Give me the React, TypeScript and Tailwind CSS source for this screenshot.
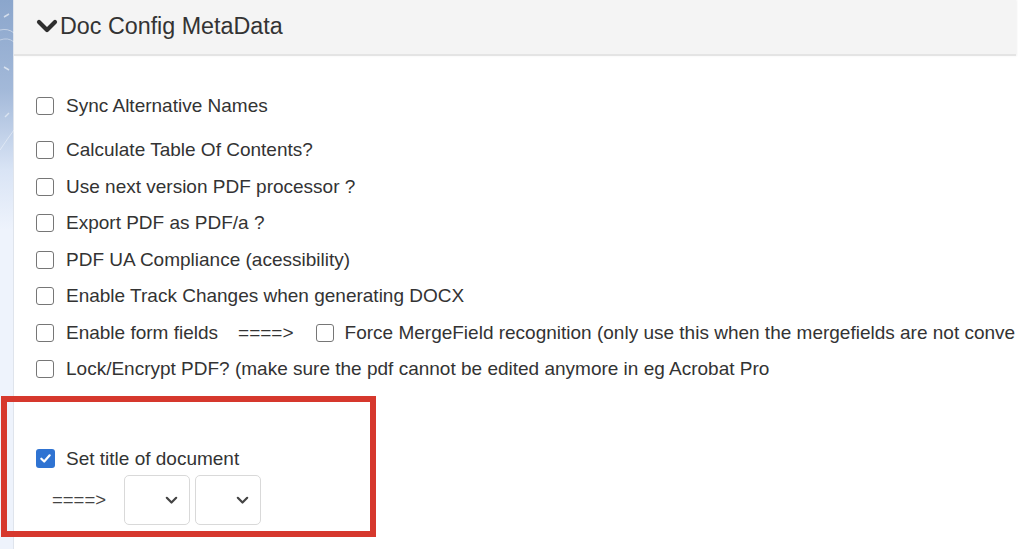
import React from 'react'

const Box = ({ checked = false }: { checked?: boolean }) =>
    checked ? (
        <span className="flex h-[19px] w-[19px] shrink-0 items-center justify-center rounded-[3px] bg-[#2f73d2]">
            <svg width="13" height="13" viewBox="0 0 14 14">
                <path d="M2.5 7.3 L5.6 10.3 L11.5 3.6" fill="none" stroke="#fff" strokeWidth="2.4" strokeLinecap="round" strokeLinejoin="round" />
            </svg>
        </span>
    ) : (
        <span className="block h-[18px] w-[18px] shrink-0 rounded-[3px] border-[1.5px] border-[#767676] bg-white" />
    )

const Row = ({ children, className = '' }: { children: React.ReactNode; className?: string }) => (
    <div className={'flex h-[36.5px] items-center whitespace-nowrap ' + className}>{children}</div>
)

const Select = () => (
    <div className="flex h-[50px] w-[66px] items-center justify-end rounded-[5px] border border-[#d9d9d9] bg-white pr-[11px]">
        <svg width="13" height="9" viewBox="0 0 13 9">
            <path d="M1.8 1.8 L6.5 6.5 L11.2 1.8" fill="none" stroke="#444" strokeWidth="2.2" strokeLinecap="round" strokeLinejoin="round" />
        </svg>
    </div>
)

const options = [
    'Calculate Table Of Contents?',
    'Use next version PDF processor ?',
    'Export PDF as PDF/a ?',
    'PDF UA Compliance (acessibility)',
    'Enable Track Changes when generating DOCX',
]

export default function App() {
    return (
        <div className="relative flex h-[549px] w-[1024px] overflow-hidden bg-white font-['Liberation_Sans',Arial,sans-serif] text-[19px] text-[#333]">
            {/* left decorative strip */}
            <div className="relative h-full w-[14px] shrink-0 border-r border-[#dfe4ec] bg-[linear-gradient(180deg,#8ba6cc_0px,#a3b9d9_90px,#d9e4f5_170px,#eef3fc_230px,#eef3fc_549px)]">
                <svg className="absolute left-0 top-0" width="14" height="200" viewBox="0 0 14 200">
                    <path d="M0 30 Q8 28 14 33" stroke="#ffffff" strokeOpacity="0.45" strokeWidth="1" fill="none" />
                    <path d="M0 40 Q8 37 14 42" stroke="#ffffff" strokeOpacity="0.4" strokeWidth="1" fill="none" />
                    <path d="M4 17 L9 14" stroke="#ffffff" strokeOpacity="0.6" strokeWidth="1.5" fill="none" />
                    <path d="M4 67 L9 70" stroke="#ffffff" strokeOpacity="0.6" strokeWidth="1.5" fill="none" />
                    <path d="M5 117 L9 113" stroke="#ffffff" strokeOpacity="0.5" strokeWidth="1.5" fill="none" />
                    <path d="M0 150 Q8 138 14 130" stroke="#ffffff" strokeOpacity="0.4" strokeWidth="1" fill="none" />
                </svg>
            </div>

            <div className="flex w-[1004px] shrink-0 flex-col overflow-hidden">
                {/* header */}
                <div className="flex h-[56px] w-[1002px] shrink-0 items-center border-b-2 border-[#e4e4e4] bg-[#f4f4f4] pb-[2px] pl-[22px] shadow-[1px_0_2px_rgba(0,0,0,0.06)]">
                    <svg width="22" height="15" viewBox="0 0 22 15" className="mr-[2px]">
                        <path d="M3 3 L11 11 L19 3" fill="none" stroke="#2e2e2e" strokeWidth="4.2" strokeLinecap="round" strokeLinejoin="round" />
                    </svg>
                    <span className="text-[23.3px]">Doc Config MetaData</span>
                </div>

                {/* options */}
                <div className="flex flex-col pl-[22px] pt-[32px]">
                    <Row className="mb-[7.5px]">
                        <Box />
                        <span className="ml-[12px]">Sync Alternative Names</span>
                    </Row>
                    {options.map(o => (
                        <Row key={o}>
                            <Box />
                            <span className="ml-[12px]">{o}</span>
                        </Row>
                    ))}
                    <Row>
                        <Box />
                        <span className="ml-[12px]">Enable form fields</span>
                        <span className="ml-[20px]">====&gt;</span>
                        <span className="ml-[22px]"><Box /></span>
                        <span className="ml-[11px]">Force MergeField recognition (only use this when the mergefields are not conve</span>
                    </Row>
                    <Row>
                        <Box />
                        <span className="ml-[12px]">Lock/Encrypt PDF? (make sure the pdf cannot be edited anymore in eg Acrobat Pro</span>
                    </Row>

                    <Row className="mt-[53px]">
                        <Box checked />
                        <span className="ml-[11px]">Set title of document</span>
                    </Row>
                    <div className="mt-[-2px] flex items-center gap-[5px]">
                        <span className="ml-[16px] mr-[13px] text-[18.5px] text-[#444]">====&gt;</span>
                        <Select />
                        <Select />
                    </div>
                </div>
            </div>

            {/* red annotation frame */}
            <div className="pointer-events-none absolute left-[1px] top-[396px] h-[141px] w-[375px] border-[6px] border-[#d6382d]" />
        </div>
    )
}
